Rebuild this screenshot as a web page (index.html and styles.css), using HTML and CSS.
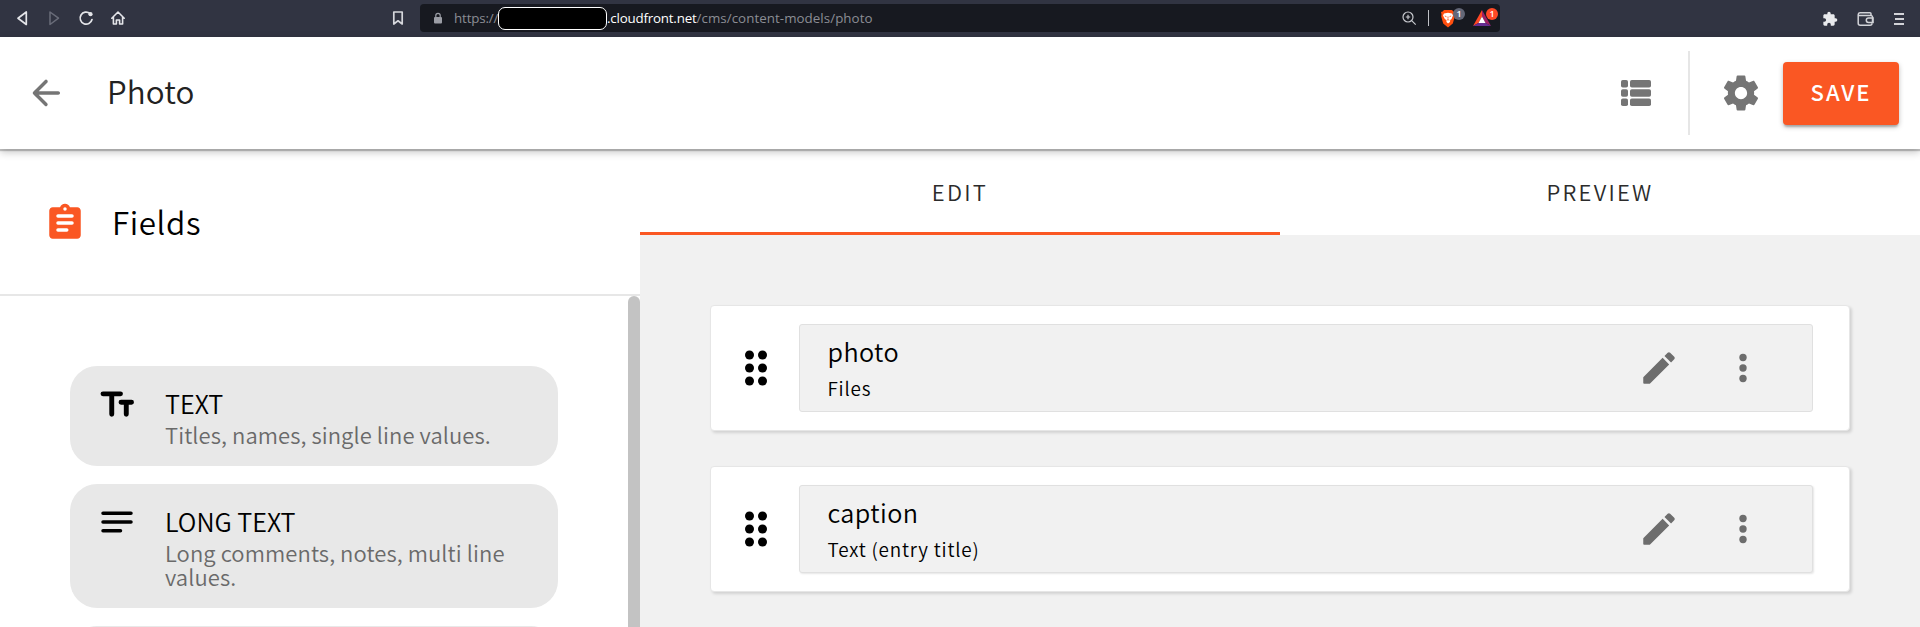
FILE: index.html
```html
<!DOCTYPE html>
<html lang="en">
<head>
<meta charset="utf-8">
<title>Photo</title>
<link rel="stylesheet" href="styles.css">
</head>
<body>
<div class="browser">
  <div class="nav-icons">
    <svg width="16" height="18" viewBox="0 0 16 18" fill="none" stroke="#e4e5e9" stroke-width="1.7" stroke-linejoin="round"><path d="M12.300 3v12.500L4 9.200z"/></svg>
    <svg width="16" height="18" viewBox="0 0 16 18" fill="none" stroke="#696c79" stroke-width="1.5" stroke-linejoin="round"><path d="M4 3v12.500l8.500-6.300z"/></svg>
    <svg width="16" height="18" viewBox="0 0 16 18" fill="none" stroke="#e4e5e9" stroke-width="1.7" stroke-linecap="round"><path d="M14 10.500a6 6 0 1 1-2-6"/><circle cx="12.500" cy="5.200" r="2.100" fill="#e4e5e9" stroke="none"/></svg>
    <svg width="16" height="18" viewBox="0 0 16 18" fill="none" stroke="#e4e5e9" stroke-width="1.600" stroke-linejoin="round" stroke-linecap="round"><path d="M1.800 9.200 8 3l6.200 6.200M3.400 8v7h3v-4h3.200v4h3V8"/></svg>
  </div>
  <svg class="bookmark" width="12" height="16" viewBox="0 0 12 16" fill="none" stroke="#d6d7dc" stroke-width="1.700" stroke-linejoin="round"><path d="M1.800 2h8.400v12L6 10.800 1.800 14z"/></svg>
  <div class="address">
    <svg class="lock" width="10" height="12" viewBox="0 0 10 12"><rect x="1" y="5" width="8" height="6.500" rx="1" fill="#9b9da5"/><path d="M2.800 5V3.500a2.200 2.200 0 0 1 4.400 0V5" fill="none" stroke="#9b9da5" stroke-width="1.200"/></svg>
    <span class="scheme">https://</span><span class="redacted"></span><span class="host">.cloudfront.net</span><span class="path">/cms/content-models/photo</span>
    <div class="address-tools">
      <svg width="16" height="16" viewBox="0 0 16 16" fill="none" stroke="#c8c9ce" stroke-width="1.200"><circle cx="7" cy="7" r="5"/><path d="M10.700 10.700l4 4M7 4.800v4.400M4.800 7h4.400"/></svg>
      <span class="bar"></span>
      <span class="shield"><svg width="16" height="19" viewBox="0 0 16 19"><path d="M4 1h8l1.300 1.500L15 3l-.5 2.500.3 2-2 7L8 18.500l-4.800-4-2-7 .3-2L1 3l1.700-.5z" fill="#ff4f0f"/><path d="M4 4.500 8 3.800l4 .7 1 2-1.500 3.500-1.300 1-.2 2L8 14.500 6.500 13l-.2-2L4.800 10 3 6.500z" fill="#fff"/><path d="M4.800 7l1.700.7M11.200 7l-1.700.7M8 7.500v2.200M6.700 11.200 8 10.600l1.300.6" stroke="#ff4f0f" stroke-width=".8" fill="none"/></svg><b class="badge grey">1</b></span>
      <span class="bat"><svg width="18" height="17" viewBox="0 0 18 17"><path d="M9 0 0 16l5.500-3L9 6.500z" fill="#ff4724"/><path d="M9 0l9 16-5.500-3L9 6.500z" fill="#9e1f63"/><path d="M0 16h18l-5.500-3h-7z" fill="#662d91"/><path d="M9 6.500 5.500 13h7z" fill="#fff"/></svg><b class="badge red">1</b></span>
    </div>
  </div>
  <div class="right-icons">
    <svg width="16" height="16" viewBox="0 0 24 24" fill="#e9eaed"><path d="M20.500 11H19V7c0-1.100-.9-2-2-2h-4V3.500a2.500 2.500 0 0 0-5 0V5H4c-1.100 0-2 .9-2 2v3.800h1.500a2.700 2.700 0 0 1 0 5.400H2V20c0 1.100.9 2 2 2h3.800v-1.500a2.700 2.700 0 0 1 5.400 0V22H17c1.100 0 2-.9 2-2v-4h1.500a2.500 2.500 0 0 0 0-5z"/></svg>
    <svg width="17" height="16" viewBox="0 0 17 16" fill="none" stroke="#d2d3d8" stroke-width="1.500"><path d="M14 4.500V2.800a1 1 0 0 0-1-1H3a2 2 0 0 0-1.800 2v8.400a2 2 0 0 0 2 2H13a2 2 0 0 0 2-2M1.200 3.600a1 1 0 0 0 1 .9H14a1.500 1.500 0 0 1 1.500 1.500v6"/><path d="M16 7h-4.500a2.200 2.200 0 0 0 0 4.400H16z"/></svg>
    <svg width="12" height="14" viewBox="0 0 12 14" stroke="#d2d3d8" stroke-width="1.800"><path d="M1 2h10M2 7h9M1 12h10"/></svg>
  </div>
</div>
<header class="topbar">
  <svg class="back" width="42" height="42" viewBox="0 0 24 24" fill="#757575"><path d="M19 11H7.830l4.880-4.880c.39-.39.39-1.030 0-1.420a1 1 0 0 0-1.410 0l-6.590 6.590a1 1 0 0 0 0 1.410l6.590 6.590a1 1 0 0 0 1.410-1.410L7.830 13H19c.55 0 1-.45 1-1s-.45-1-1-1z"/></svg>
  <h1 class="title"><span>Photo</span></h1>
  <div class="actions">
    <svg class="list" width="30" height="26" viewBox="0 0 30 26" fill="#757575"><rect width="7" height="7.600" rx="1.800"/><rect x="9" width="21" height="7.600" rx="1.800"/><rect y="9.200" width="7" height="7.600" rx="1.800"/><rect x="9" y="9.200" width="21" height="7.600" rx="1.800"/><rect y="18.400" width="7" height="7.600" rx="1.800"/><rect x="9" y="18.400" width="21" height="7.600" rx="1.800"/></svg>
    <span class="rule"></span>
    <svg class="gear" width="42" height="42" viewBox="0 0 24 24" fill="#757575"><path d="M19.430 12.980c.04-.32.07-.64.07-.98s-.03-.66-.07-.98l2.110-1.650c.19-.15.24-.42.12-.64l-2-3.460c-.12-.22-.39-.3-.61-.22l-2.490 1c-.52-.4-1.080-.73-1.690-.98l-.38-2.650C14.460 2.180 14.250 2 14 2h-4c-.25 0-.46.18-.49.42l-.38 2.650c-.61.25-1.170.59-1.690.98l-2.490-1c-.23-.09-.49 0-.61.22l-2 3.460c-.13.22-.07.49.12.64l2.110 1.650c-.04.32-.07.65-.07.98s.03.66.07.98l-2.110 1.650c-.19.15-.24.42-.12.64l2 3.460c.12.22.39.3.61.22l2.490-1c.52.4 1.080.73 1.690.98l.38 2.650c.03.24.24.42.49.42h4c.25 0 .46-.18.49-.42l.38-2.650c.61-.25 1.170-.59 1.690-.98l2.490 1c.23.09.49 0 .61-.22l2-3.460c.12-.22.07-.49-.12-.64l-2.110-1.650zM12 15.500c-1.930 0-3.500-1.570-3.500-3.500s1.570-3.500 3.500-3.500 3.500 1.570 3.500 3.500-1.570 3.500-3.500 3.500z"/></svg>
    <button class="save"><span>SAVE</span></button>
  </div>
</header>
<main class="main">
  <aside class="side">
    <div class="side-head">
      <svg class="clipboard" width="42" height="42" viewBox="0 0 24 24" fill="#fa5723"><path d="M19 3h-4.180C14.400 1.840 13.300 1 12 1s-2.400.84-2.820 2H5c-1.100 0-2 .9-2 2v14c0 1.100.9 2 2 2h14c1.100 0 2-.9 2-2V5c0-1.100-.9-2-2-2z"/><circle cx="12" cy="4" r="1" fill="#fff"/><path d="M8 8h8M8 12h8M8 16h5" stroke="#fff" stroke-width="2" stroke-linecap="round"/></svg>
      <h2 class="side-title"><span>Fields</span></h2>
    </div>
    <div class="side-body">
      <div class="fields">
        <div class="field">
          <svg width="42" height="42" viewBox="0 0 24 24" fill="none" stroke="#000" stroke-width="2.800" stroke-linecap="round"><path d="M4 6.200h10M9 6.200v11.700M14.300 11h6M17.300 11v6.900"/></svg>
          <div class="field-text"><h3><span>TEXT</span></h3><p><span>Titles, names, single line values.</span></p></div>
        </div>
        <div class="field">
          <svg width="42" height="42" viewBox="0 0 24 24" fill="none" stroke="#000" stroke-width="2" stroke-linecap="round"><path d="M4 7h16M4 12h16M4 17h10"/></svg>
          <div class="field-text"><h3><span>LONG TEXT</span></h3><p><span>Long comments, notes, multi line values.</span></p></div>
        </div>
        <div class="field"></div>
      </div>
      <div class="scroll"></div>
    </div>
  </aside>
  <section class="content">
    <nav class="tabs"><a class="tab active"><span>EDIT</span></a><a class="tab"><span>PREVIEW</span></a></nav>
    <div class="cards">
      <div class="card">
        <svg class="drag" width="24" height="38" viewBox="0 0 24 38"><g><circle cx="5.500" cy="6" r="4.500"/><circle cx="18.500" cy="6" r="4.500"/><circle cx="5.500" cy="19" r="4.500"/><circle cx="18.500" cy="19" r="4.500"/><circle cx="5.500" cy="32" r="4.500"/><circle cx="18.500" cy="32" r="4.500"/></g></svg>
        <div class="inner">
          <div class="label"><div class="name"><span>photo</span></div><div class="kind"><span>Files</span></div></div>
          <svg class="pencil" width="42" height="42" viewBox="0 0 24 24" fill="#6d6d6d"><path d="M3 17.460v3.040c0 .28.22.5.5.5h3.040c.13 0 .26-.05.35-.15L17.810 9.940l-3.750-3.750L3.150 17.100c-.1.100-.15.220-.15.360zM20.710 7.040a1 1 0 0 0 0-1.410l-2.340-2.340a1 1 0 0 0-1.410 0l-1.830 1.830 3.750 3.750 1.830-1.830z"/></svg>
          <svg class="more" width="42" height="42" viewBox="0 0 24 24" fill="#6d6d6d"><circle cx="12" cy="6" r="2.100"/><circle cx="12" cy="12" r="2.100"/><circle cx="12" cy="18" r="2.100"/></svg>
        </div>
      </div>
      <div class="card">
        <svg class="drag" width="24" height="38" viewBox="0 0 24 38"><g><circle cx="5.500" cy="6" r="4.500"/><circle cx="18.500" cy="6" r="4.500"/><circle cx="5.500" cy="19" r="4.500"/><circle cx="18.500" cy="19" r="4.500"/><circle cx="5.500" cy="32" r="4.500"/><circle cx="18.500" cy="32" r="4.500"/></g></svg>
        <div class="inner raised">
          <div class="label"><div class="name"><span>caption</span></div><div class="kind"><span>Text (entry title)</span></div></div>
          <svg class="pencil" width="42" height="42" viewBox="0 0 24 24" fill="#6d6d6d"><path d="M3 17.460v3.040c0 .28.22.5.5.5h3.040c.13 0 .26-.05.35-.15L17.810 9.940l-3.750-3.750L3.150 17.100c-.1.100-.15.220-.15.360zM20.710 7.040a1 1 0 0 0 0-1.410l-2.340-2.340a1 1 0 0 0-1.410 0l-1.830 1.830 3.750 3.750 1.830-1.830z"/></svg>
          <svg class="more" width="42" height="42" viewBox="0 0 24 24" fill="#6d6d6d"><circle cx="12" cy="6" r="2.100"/><circle cx="12" cy="12" r="2.100"/><circle cx="12" cy="18" r="2.100"/></svg>
        </div>
      </div>
    </div>
  </section>
</main>
</body>
</html>
```
FILE: styles.css
```css
* { box-sizing: border-box; }
body { margin: 0; height: 627px; overflow: hidden; display: flex; flex-direction: column; background: #fff; color: #000; font-family: "Noto Sans CJK SC", sans-serif; font-weight: 350; }
h1, h2, h3, p { margin: 0; font-weight: 350; }
svg { display: block; flex: none; }

.browser { height: 37px; flex: none; background: #313442; display: flex; align-items: flex-start; font-family: "Open Sans", sans-serif; font-weight: 400; }
.nav-icons { display: flex; gap: 16px; padding: 9px 0 0 14px; width: 392px; }
.bookmark { margin-top: 10px; }
.address { margin: 4px 0 0 16px; width: 1080px; height: 28px; border-radius: 4px; background: #171920; display: flex; align-items: center; padding-left: 13px; font-size: 13.350px; color: #8b8d94; white-space: pre; }
.lock { margin-right: 11px; }
.scheme { width: 44px; letter-spacing: -.15px; }
.redacted { width: 109px; height: 23px; border: 1px solid #fff; border-radius: 7px; background: #000; }
.host { color: #fff; letter-spacing: -.2px; }
.path { letter-spacing: .05px; }
.address-tools { margin-left: auto; display: flex; align-items: center; height: 28px; padding-right: 9px; }
.bar { width: 1px; height: 16px; background: #c0c1c6; margin: 0 11px 0 11px; }
.shield, .bat { position: relative; }
.shield { margin-right: 17px; }
.badge { position: absolute; right: -9px; top: -1px; width: 12px; height: 12px; border-radius: 6px; color: #fff; font: 600 9px/12px "Open Sans", sans-serif; text-align: center; }
.grey { background: #636777; }
.red { background: #ff4a26; right: -7px; top: -2px; }
.right-icons { margin-left: auto; display: flex; align-items: center; height: 37px; gap: 19px; padding-right: 15px; }

.topbar { height: 112px; flex: none; display: flex; align-items: center; background: #fff; position: relative; z-index: 1; box-shadow: 0 2px 1px rgba(0,0,0,.2), 0 3px 8px rgba(0,0,0,.24); padding-left: 25px; }
.title { margin-left: 40px; padding-bottom: 4px; font-size: 31.400px; line-height: 50px; letter-spacing: .1px; color: #222; }
.actions { margin-left: auto; display: flex; align-items: center; padding-right: 21px; }
.rule { width: 2px; height: 84px; background: #e6e6e6; margin: 0 30px 0 37px; }
.gear { margin-right: 21px; }
.save { width: 116px; height: 63px; border: 0; border-radius: 4px; background: #fa5723; color: #fff; font: 500 22px/32px "Noto Sans CJK SC", sans-serif; letter-spacing: 2px; padding: 0 0 4px; box-shadow: 0 3px 2px -1px rgba(0,0,0,.2), 0 2px 5px rgba(0,0,0,.25); }

.main { flex: 1; min-height: 0; display: flex; }
.side { width: 640px; display: flex; flex-direction: column; }
.side-head { height: 147px; border-bottom: 2px solid #e7e7e7; display: flex; align-items: center; padding-left: 44px; }
.clipboard { margin-top: 2px; }
.side-title { margin-left: 26px; font-size: 31.400px; line-height: 50px; letter-spacing: .6px; }
.side-body { flex: 1; min-height: 0; display: flex; overflow: hidden; }
.scroll { width: 12px; height: 500px; border-radius: 6px; background: #c3c3c3; margin-left: 70px; }
.fields { padding: 70px 0 0 70px; width: 558px; display: flex; flex-direction: column; gap: 18px; }
.field { flex: none; min-height: 100px; border-radius: 27px; background: #e8e8e8; display: flex; padding: 17px 26px 19px; }
.field-text { margin-left: 27px; padding-top: 4px; }
.field h3 { font-size: 25.200px; line-height: 32px; margin-bottom: 4px; }
.field p { font-size: 22px; line-height: 24px; margin-top: -1px; padding-bottom: 1px; letter-spacing: .08px; color: #6a6a6a; }

.content { flex: 1; display: flex; flex-direction: column; background: #f1f1f1; }
.tabs { display: flex; height: 86px; background: #fff; }
.tab { flex: 1; display: flex; align-items: center; justify-content: center; border-bottom: 3px solid transparent; font-size: 22px; letter-spacing: 2.250px; color: #2b2b2b; }
.active { border-color: #fa5723; }
.cards { padding: 70px 70px 0 70px; display: flex; flex-direction: column; gap: 35px; }
.card { height: 126px; border: 1px solid #e6e6e6; border-radius: 4px; background: #fff; display: flex; align-items: center; padding: 0 36px 0 32.500px; box-shadow: 2px 2px 3px rgba(0,0,0,.13); }
.inner { margin-left: 31.500px; flex: 1; height: 88px; border: 1px solid #e0e0e0; border-radius: 3px; background: #f1f1f1; display: flex; align-items: center; padding: 0 48px 0 27.500px; }
.raised { box-shadow: 1px 1px 2px rgba(0,0,0,.1); }
.label { margin-right: auto; }
.name { font-size: 25.200px; line-height: 36px; letter-spacing: .4px; margin: 0 0 3px; }
.kind { font-size: 18.900px; line-height: 32px; letter-spacing: .8px; }
.more { margin-left: 42px; }
```
